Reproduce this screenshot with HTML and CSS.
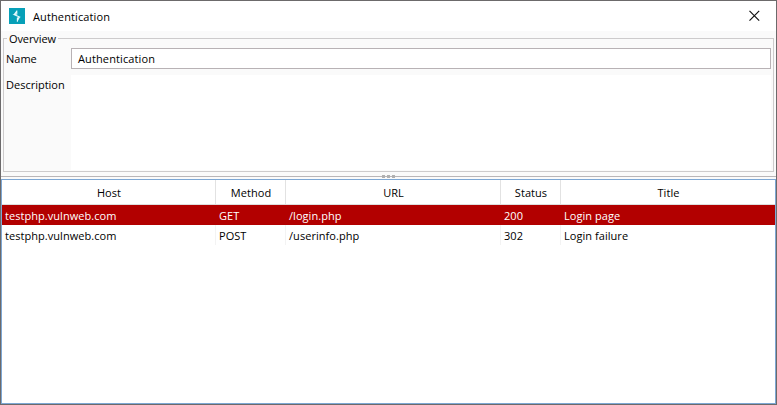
FILE: index.html
```html
<!DOCTYPE html>
<html lang="en">
<head>
<meta charset="utf-8">
<title>Authentication</title>
<link rel="stylesheet" href="styles.css">
</head>
<body>
<div class="window">
  <header class="titlebar">
    <svg class="logo" width="16" height="16" viewBox="0 0 16 16"><rect width="16" height="16" fill="#07a0b8"/><path d="M7.8 2.5V6L5.2 6.6L10.5 9L8.4 10V13.8M7.8 3.2L5.2 6.6M10.5 9L8.4 12.8" fill="none" stroke="#e8fafc" stroke-width="1.1"/></svg>
    <h1 class="title">Authentication</h1>
    <svg class="close" width="12" height="12" viewBox="0 0 12 12"><path d="M.5 .9L10.2 10.6M10.2 .9L.5 10.6" stroke="#111" stroke-width="1.2"/></svg>
  </header>
  <main class="content">
    <fieldset class="overview">
      <legend class="legend">Overview</legend>
      <div class="form">
        <span class="label">Name</span>
        <div class="field">Authentication</div>
        <span class="label label-area">Description</span>
        <div class="area"></div>
      </div>
    </fieldset>
    <div class="splitter"><i></i><i></i><i></i></div>
    <div class="table">
      <div class="row head"><span>Host</span><span>Method</span><span>URL</span><span>Status</span><span>Title</span></div>
      <div class="row selected"><span>testphp.vulnweb.com</span><span>GET</span><span>/login.php</span><span>200</span><span>Login page</span></div>
      <div class="row"><span>testphp.vulnweb.com</span><span>POST</span><span>/userinfo.php</span><span>302</span><span>Login failure</span></div>
    </div>
  </main>
</div>
</body>
</html>
```
FILE: styles.css
```css
* { box-sizing: border-box; }
body {
  margin: 0;
  font: 11px/16px "Open Sans", "Noto Sans", sans-serif;
  letter-spacing: 0.05px;
  color: #000;
}
.window {
  display: flex;
  flex-direction: column;
  width: 777px;
  height: 405px;
  border: 1px solid #6c6a6b;
  background: #fafafa;
}
.titlebar {
  display: flex;
  align-items: center;
  height: 30px;
  padding: 0 15px 0 8px;
  background: #fff;
}
.title {
  flex: 1;
  margin: 0 0 0 8px;
  padding-top: 2px;
  font-size: 11px;
  font-weight: 400;
  letter-spacing: 0.12px;
}
.content {
  display: flex;
  flex: 1;
  flex-direction: column;
}
.overview {
  height: 141px;
  min-width: 0;
  margin: 0 2px;
  padding: 0 2px;
  border: 1px solid #cdcbcc;
}
.legend {
  height: 15px;
  margin-left: 1px;
  padding: 0 2px;
  line-height: 16px;
  letter-spacing: -0.1px;
}
.form {
  display: grid;
  grid-template-columns: 65px 1fr;
  grid-template-rows: 21px 95px;
  row-gap: 6px;
  margin-top: 2px;
}
.label {
  line-height: 21px;
  letter-spacing: 0;
}
.label-area { line-height: 19px; }
.field {
  height: 21px;
  padding-left: 6px;
  border: 1px solid #b8b2b5;
  background: #fff;
  line-height: 20px;
  letter-spacing: 0.12px;
}
.area { background: #fff; }
.splitter {
  display: flex;
  justify-content: center;
  gap: 2px;
  height: 3px;
  margin: 3px 0 1px;
  background: linear-gradient(#b9b5b7, #b9b5b7) 0 1px / 100% 1px no-repeat;
}
.splitter i {
  width: 3px;
  height: 3px;
  background: #b0b0b0;
}
.table {
  flex: 1;
  border: 1px solid #7da7d4;
  background: #fff;
}
.row {
  display: grid;
  grid-template-columns: 214px 70px 215px 60px 1fr;
  height: 20px;
  line-height: 22px;
}
.row span {
  height: 20px;
  padding-left: 3px;
  border-right: 1px solid #f3f3f3;
}
.row span:last-child { border-right: 0; }
.head {
  height: 25px;
  line-height: 25px;
  border-bottom: 1px solid #dedede;
  text-align: center;
}
.row.head span {
  height: 24px;
  padding: 0 0 0 1px;
  border-color: #e2e2e2;
}
.selected { background: #b20000; color: #fff; }
.selected span { border-color: #b20000; }
```
